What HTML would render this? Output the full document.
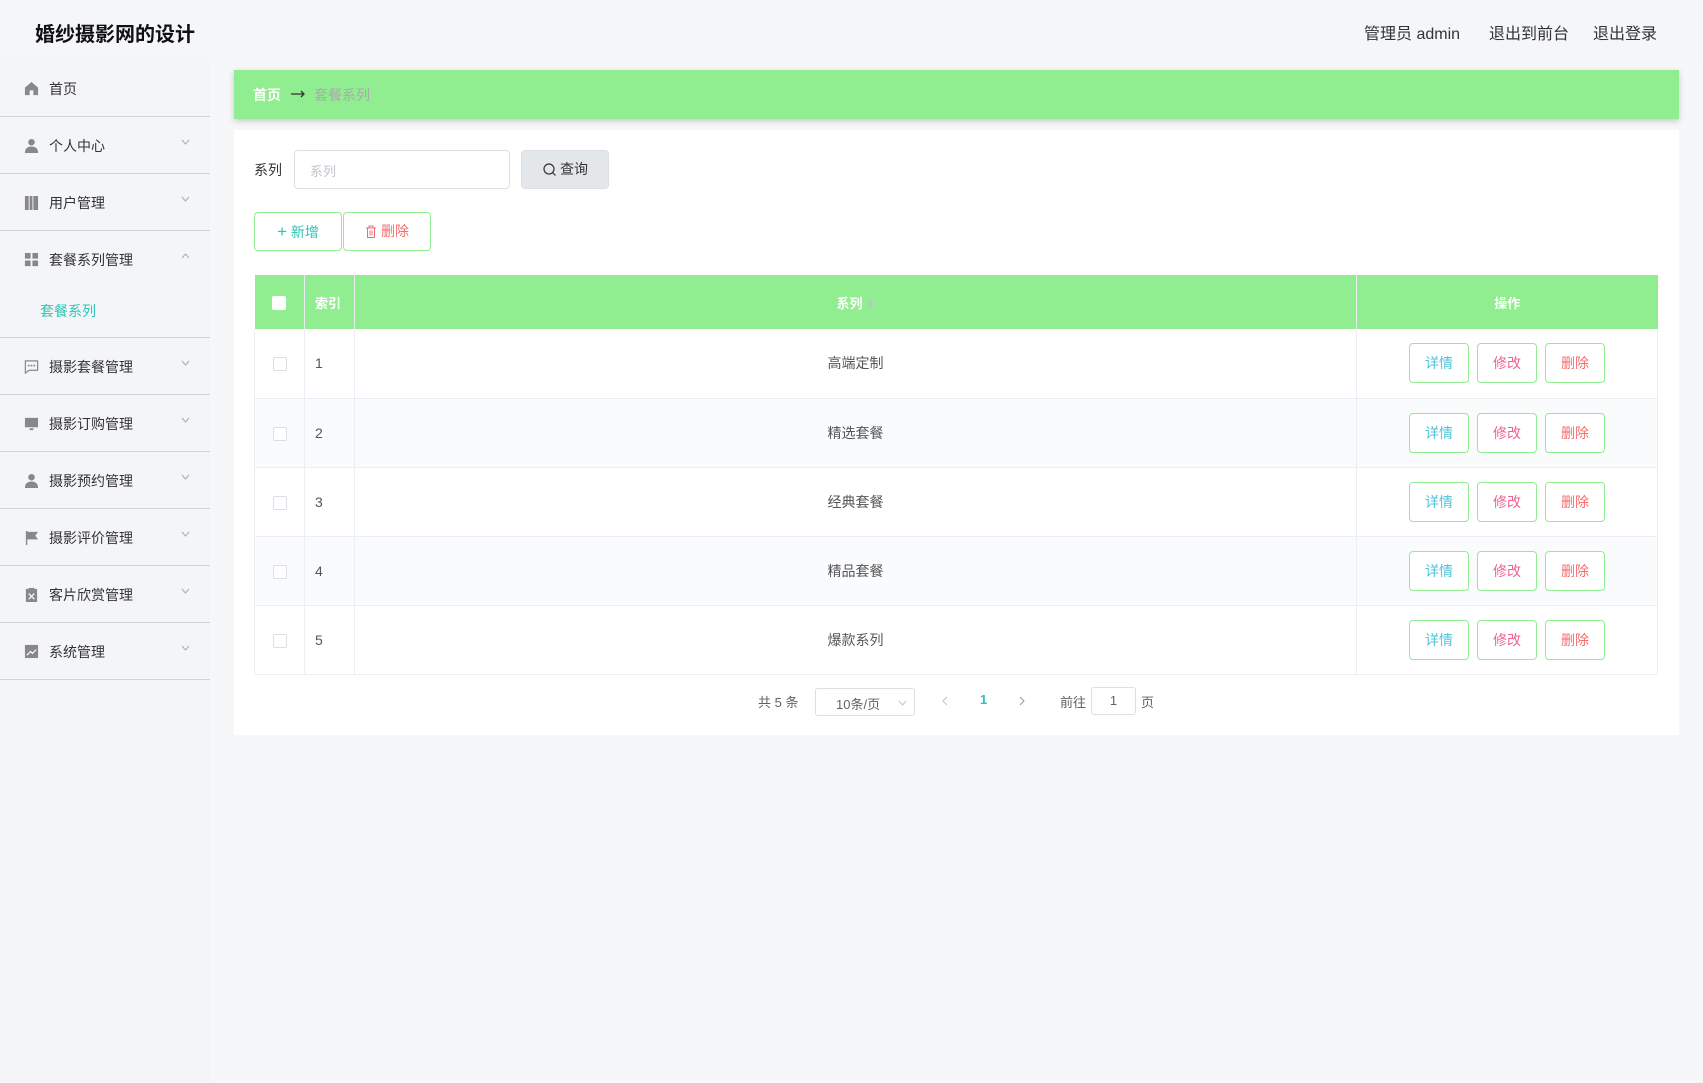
<!DOCTYPE html>
<html><head><meta charset="utf-8">
<style>
*{margin:0;padding:0;box-sizing:border-box}
body{width:1703px;height:1083px;background:#f5f6f9;font-family:"Liberation Sans","Noto Sans CJK SC",sans-serif;position:relative;overflow:hidden;color:#333}
.a{position:absolute}
.title{left:35px;top:18px;font-size:20px;font-weight:bold;color:#111}
.hr{top:20px;font-size:16px;color:#333}
.side{left:0;top:60px;width:210px;height:1023px;background:#f4f5f8}
.mi{position:absolute;left:0;width:210px;height:57px;border-bottom:1px solid #d4d4d6;font-size:14px;color:#333}
.mi .ic{position:absolute;left:24px;top:21px;width:15px;height:15px}
.mi .t{position:absolute;left:49px;top:19px}
.mi .ar{position:absolute;left:181px;top:22px;width:9px;height:6px}
.main{left:210px;top:60px;width:1493px;height:1023px;background:#f6f7f9}
.bc{left:234px;top:70px;width:1445px;height:49px;background:#90ee90;box-shadow:0 2px 6px rgba(0,0,0,.2)}
.panel{left:234px;top:130px;width:1445px;height:605px;background:#fff}
.btn{position:absolute;border:1px solid #90ee90;border-radius:4px;background:#fff;font-size:14px;text-align:center}
table{position:absolute;left:254px;top:275px;width:1404px;border-collapse:collapse;font-size:14px}
th{background:#90ee90;color:#fff;height:54px;border-right:1px solid #e8ecf0;font-weight:bold;font-size:13px}
td{height:69px;border-bottom:1px solid #ebeef5;border-right:1px solid #ebeef5;color:#555}
tr:nth-child(odd) td{background:#fafbfd}
td:first-child{border-left:1px solid #ebeef5}
.cb{display:inline-block;width:14px;height:14px;border:1px solid #dcdfe6;border-radius:2px;background:#fff;vertical-align:middle}
.ab{display:inline-block;width:60px;height:40px;line-height:38px;border:1px solid #90ee90;border-radius:4px;margin:0 4px;font-size:14px;background:#fff}
</style></head><body>
<div class="a title">婚纱摄影网的设计</div>
<div class="a hr" style="left:1364px">管理员 admin</div>
<div class="a hr" style="left:1489px">退出到前台</div>
<div class="a hr" style="left:1593px">退出登录</div>

<div class="a side">
 <div class="mi" style="top:0"><svg class="ic" viewBox="0 0 16 16"><path d="M8 1L1 7v8h5v-5h4v5h5V7z" fill="#888"/></svg><span class="t">首页</span></div>
 <div class="mi" style="top:57px"><svg class="ic" viewBox="0 0 16 16"><circle cx="8" cy="4.5" r="3.5" fill="#888"/><path d="M1 16c0-5 3-7 7-7s7 2 7 7z" fill="#888"/></svg><span class="t">个人中心</span><svg class="ar" viewBox="0 0 9 6"><path d="M1 1l3.5 4L8 1" stroke="#aaa" fill="none"/></svg></div>
 <div class="mi" style="top:114px"><svg class="ic" viewBox="0 0 16 16"><path d="M1 1h4v15H1zM6 1h3v15H6zM10 1h5v15h-5z" fill="#888"/></svg><span class="t">用户管理</span><svg class="ar" viewBox="0 0 9 6"><path d="M1 1l3.5 4L8 1" stroke="#aaa" fill="none"/></svg></div>
 <div class="mi" style="top:171px;height:107px"><svg class="ic" viewBox="0 0 16 16"><path d="M1 1h6v6H1zM9 1h6v6H9zM1 9h6v6H1zM9 9h6v6H9z" fill="#888"/></svg><span class="t">套餐系列管理</span><svg class="ar" viewBox="0 0 9 6"><path d="M1 5l3.5-4L8 5" stroke="#aaa" fill="none"/></svg><span style="position:absolute;left:40px;top:70px;color:#2ec4b6">套餐系列</span></div>
 <div class="mi" style="top:278px"><svg class="ic" viewBox="0 0 16 16"><path d="M1.5 2h13v10h-9l-4 3z" fill="none" stroke="#888" stroke-width="1.3"/><circle cx="5" cy="7" r="1" fill="#888"/><circle cx="8" cy="7" r="1" fill="#888"/><circle cx="11" cy="7" r="1" fill="#888"/></svg><span class="t">摄影套餐管理</span><svg class="ar" viewBox="0 0 9 6"><path d="M1 1l3.5 4L8 1" stroke="#aaa" fill="none"/></svg></div>
 <div class="mi" style="top:335px"><svg class="ic" viewBox="0 0 16 16"><path d="M1 2h14v10H1zM6 13h4v2H6z" fill="#888"/></svg><span class="t">摄影订购管理</span><svg class="ar" viewBox="0 0 9 6"><path d="M1 1l3.5 4L8 1" stroke="#aaa" fill="none"/></svg></div>
 <div class="mi" style="top:392px"><svg class="ic" viewBox="0 0 16 16"><circle cx="8" cy="4.5" r="3.5" fill="#888"/><path d="M1 16c0-5 3-7 7-7s7 2 7 7z" fill="#888"/></svg><span class="t">摄影预约管理</span><svg class="ar" viewBox="0 0 9 6"><path d="M1 1l3.5 4L8 1" stroke="#aaa" fill="none"/></svg></div>
 <div class="mi" style="top:449px"><svg class="ic" viewBox="0 0 16 16"><path d="M2 1h1.5v15H2zM3.5 2H15l-3 4 3 4H3.5z" fill="#888"/></svg><span class="t">摄影评价管理</span><svg class="ar" viewBox="0 0 9 6"><path d="M1 1l3.5 4L8 1" stroke="#aaa" fill="none"/></svg></div>
 <div class="mi" style="top:506px"><svg class="ic" viewBox="0 0 16 16"><path d="M2 2h12v14H2z" fill="#888"/><path d="M5 1h6v3H5z" fill="#888"/><path d="M5 7l6 6M11 7l-6 6" stroke="#fff" stroke-width="1.3"/></svg><span class="t">客片欣赏管理</span><svg class="ar" viewBox="0 0 9 6"><path d="M1 1l3.5 4L8 1" stroke="#aaa" fill="none"/></svg></div>
 <div class="mi" style="top:563px"><svg class="ic" viewBox="0 0 16 16"><path d="M1 1h14v14H1z" fill="#888"/><path d="M3 12l4-4 2 2 4-4" stroke="#fff" stroke-width="1.3" fill="none"/></svg><span class="t">系统管理</span><svg class="ar" viewBox="0 0 9 6"><path d="M1 1l3.5 4L8 1" stroke="#aaa" fill="none"/></svg></div>
</div>

<div class="a main"></div>
<div class="a bc"><span class="a" style="left:19px;top:15px;color:#fff;font-weight:bold;font-size:14px">首页</span><svg class="a" style="left:57px;top:20px" width="15" height="8" viewBox="0 0 15 8"><path d="M0 4h13M10 1l3 3-3 3" stroke="#333" stroke-width="1.3" fill="none"/></svg><span class="a" style="left:80px;top:15px;color:#aaa;font-size:14px">套餐系列</span></div>
<div class="a panel"></div>
<div class="a" style="left:254px;top:160px;font-size:14px">系列</div>
<div class="a" style="left:294px;top:150px;width:216px;height:39px;border:1px solid #dcdfe6;border-radius:4px;background:#fff;color:#c0c4cc;font-size:13px;padding:10px 15px">系列</div>
<div class="a" style="left:521px;top:150px;width:88px;height:39px;background:#e4e7ea;border:1px solid #dcdfe6;border-radius:4px;font-size:14px;line-height:37px;padding-left:21px"><svg width="13" height="13" viewBox="0 0 13 13" style="vertical-align:-2px;margin-right:4px"><circle cx="6" cy="6" r="5" stroke="#333" stroke-width="1.2" fill="none"/><path d="M9.5 9.5l3 3" stroke="#333" stroke-width="1.2"/></svg>查询</div>
<div class="btn" style="left:254px;top:212px;width:88px;height:39px;line-height:37px;color:#2ec4b6"><span style="font-size:17px">+</span> 新增</div>
<div class="btn" style="left:343px;top:212px;width:88px;height:39px;line-height:37px;color:#f56c6c"><svg width="12" height="13" viewBox="0 0 12 13" style="vertical-align:-2px;margin-right:4px"><path d="M1 3h10M4 3V1h4v2M2.5 3v9.5h7V3M5 5.5v5M7 5.5v5" stroke="#f56c6c" fill="none"/></svg>删除</div>

<table>
<tr><th style="width:50px"><span class="cb" style="border:none"></span></th><th style="width:50px;text-align:left;padding-left:10px">索引</th><th>系列 <span style="color:#c0c4cc;font-size:10px">⬍</span></th><th style="width:301px;border-right:none">操作</th></tr>
<tr><td style="text-align:center"><span class="cb"></span></td><td style="padding-left:10px">1</td><td style="text-align:center">高端定制</td><td style="text-align:center"><span class="ab" style="color:#4fc3d9">详情</span><span class="ab" style="color:#f06292">修改</span><span class="ab" style="color:#f56c6c">删除</span></td></tr>
<tr><td style="text-align:center"><span class="cb"></span></td><td style="padding-left:10px">2</td><td style="text-align:center">精选套餐</td><td style="text-align:center"><span class="ab" style="color:#4fc3d9">详情</span><span class="ab" style="color:#f06292">修改</span><span class="ab" style="color:#f56c6c">删除</span></td></tr>
<tr><td style="text-align:center"><span class="cb"></span></td><td style="padding-left:10px">3</td><td style="text-align:center">经典套餐</td><td style="text-align:center"><span class="ab" style="color:#4fc3d9">详情</span><span class="ab" style="color:#f06292">修改</span><span class="ab" style="color:#f56c6c">删除</span></td></tr>
<tr><td style="text-align:center"><span class="cb"></span></td><td style="padding-left:10px">4</td><td style="text-align:center">精品套餐</td><td style="text-align:center"><span class="ab" style="color:#4fc3d9">详情</span><span class="ab" style="color:#f06292">修改</span><span class="ab" style="color:#f56c6c">删除</span></td></tr>
<tr><td style="text-align:center"><span class="cb"></span></td><td style="padding-left:10px">5</td><td style="text-align:center">爆款系列</td><td style="text-align:center"><span class="ab" style="color:#4fc3d9">详情</span><span class="ab" style="color:#f06292">修改</span><span class="ab" style="color:#f56c6c">删除</span></td></tr>
</table>

<div class="a" style="left:758px;top:692px;font-size:13px;color:#606266">共 5 条</div>
<div class="a" style="left:815px;top:688px;width:100px;height:28px;border:1px solid #dcdfe6;border-radius:3px;font-size:13px;color:#606266;padding:5px 20px">10条/页<svg style="position:absolute;right:7px;top:11px" width="9" height="6" viewBox="0 0 9 6"><path d="M1 1l3.5 4L8 1" stroke="#c0c4cc" fill="none"/></svg></div>
<svg class="a" style="left:942px;top:696px" width="6" height="10" viewBox="0 0 6 10"><path d="M5 1L1 5l4 4" stroke="#c0c4cc" fill="none"/></svg>
<div class="a" style="left:980px;top:692px;font-size:13px;color:#2ec4b6;font-weight:bold">1</div>
<svg class="a" style="left:1019px;top:696px" width="6" height="10" viewBox="0 0 6 10"><path d="M1 1l4 4-4 4" stroke="#999" fill="none"/></svg>
<div class="a" style="left:1060px;top:692px;font-size:13px;color:#606266">前往</div>
<div class="a" style="left:1091px;top:687px;width:45px;height:28px;border:1px solid #dcdfe6;border-radius:3px;font-size:13px;text-align:center;line-height:26px;color:#606266">1</div>
<div class="a" style="left:1141px;top:692px;font-size:13px;color:#606266">页</div>
</body></html>
